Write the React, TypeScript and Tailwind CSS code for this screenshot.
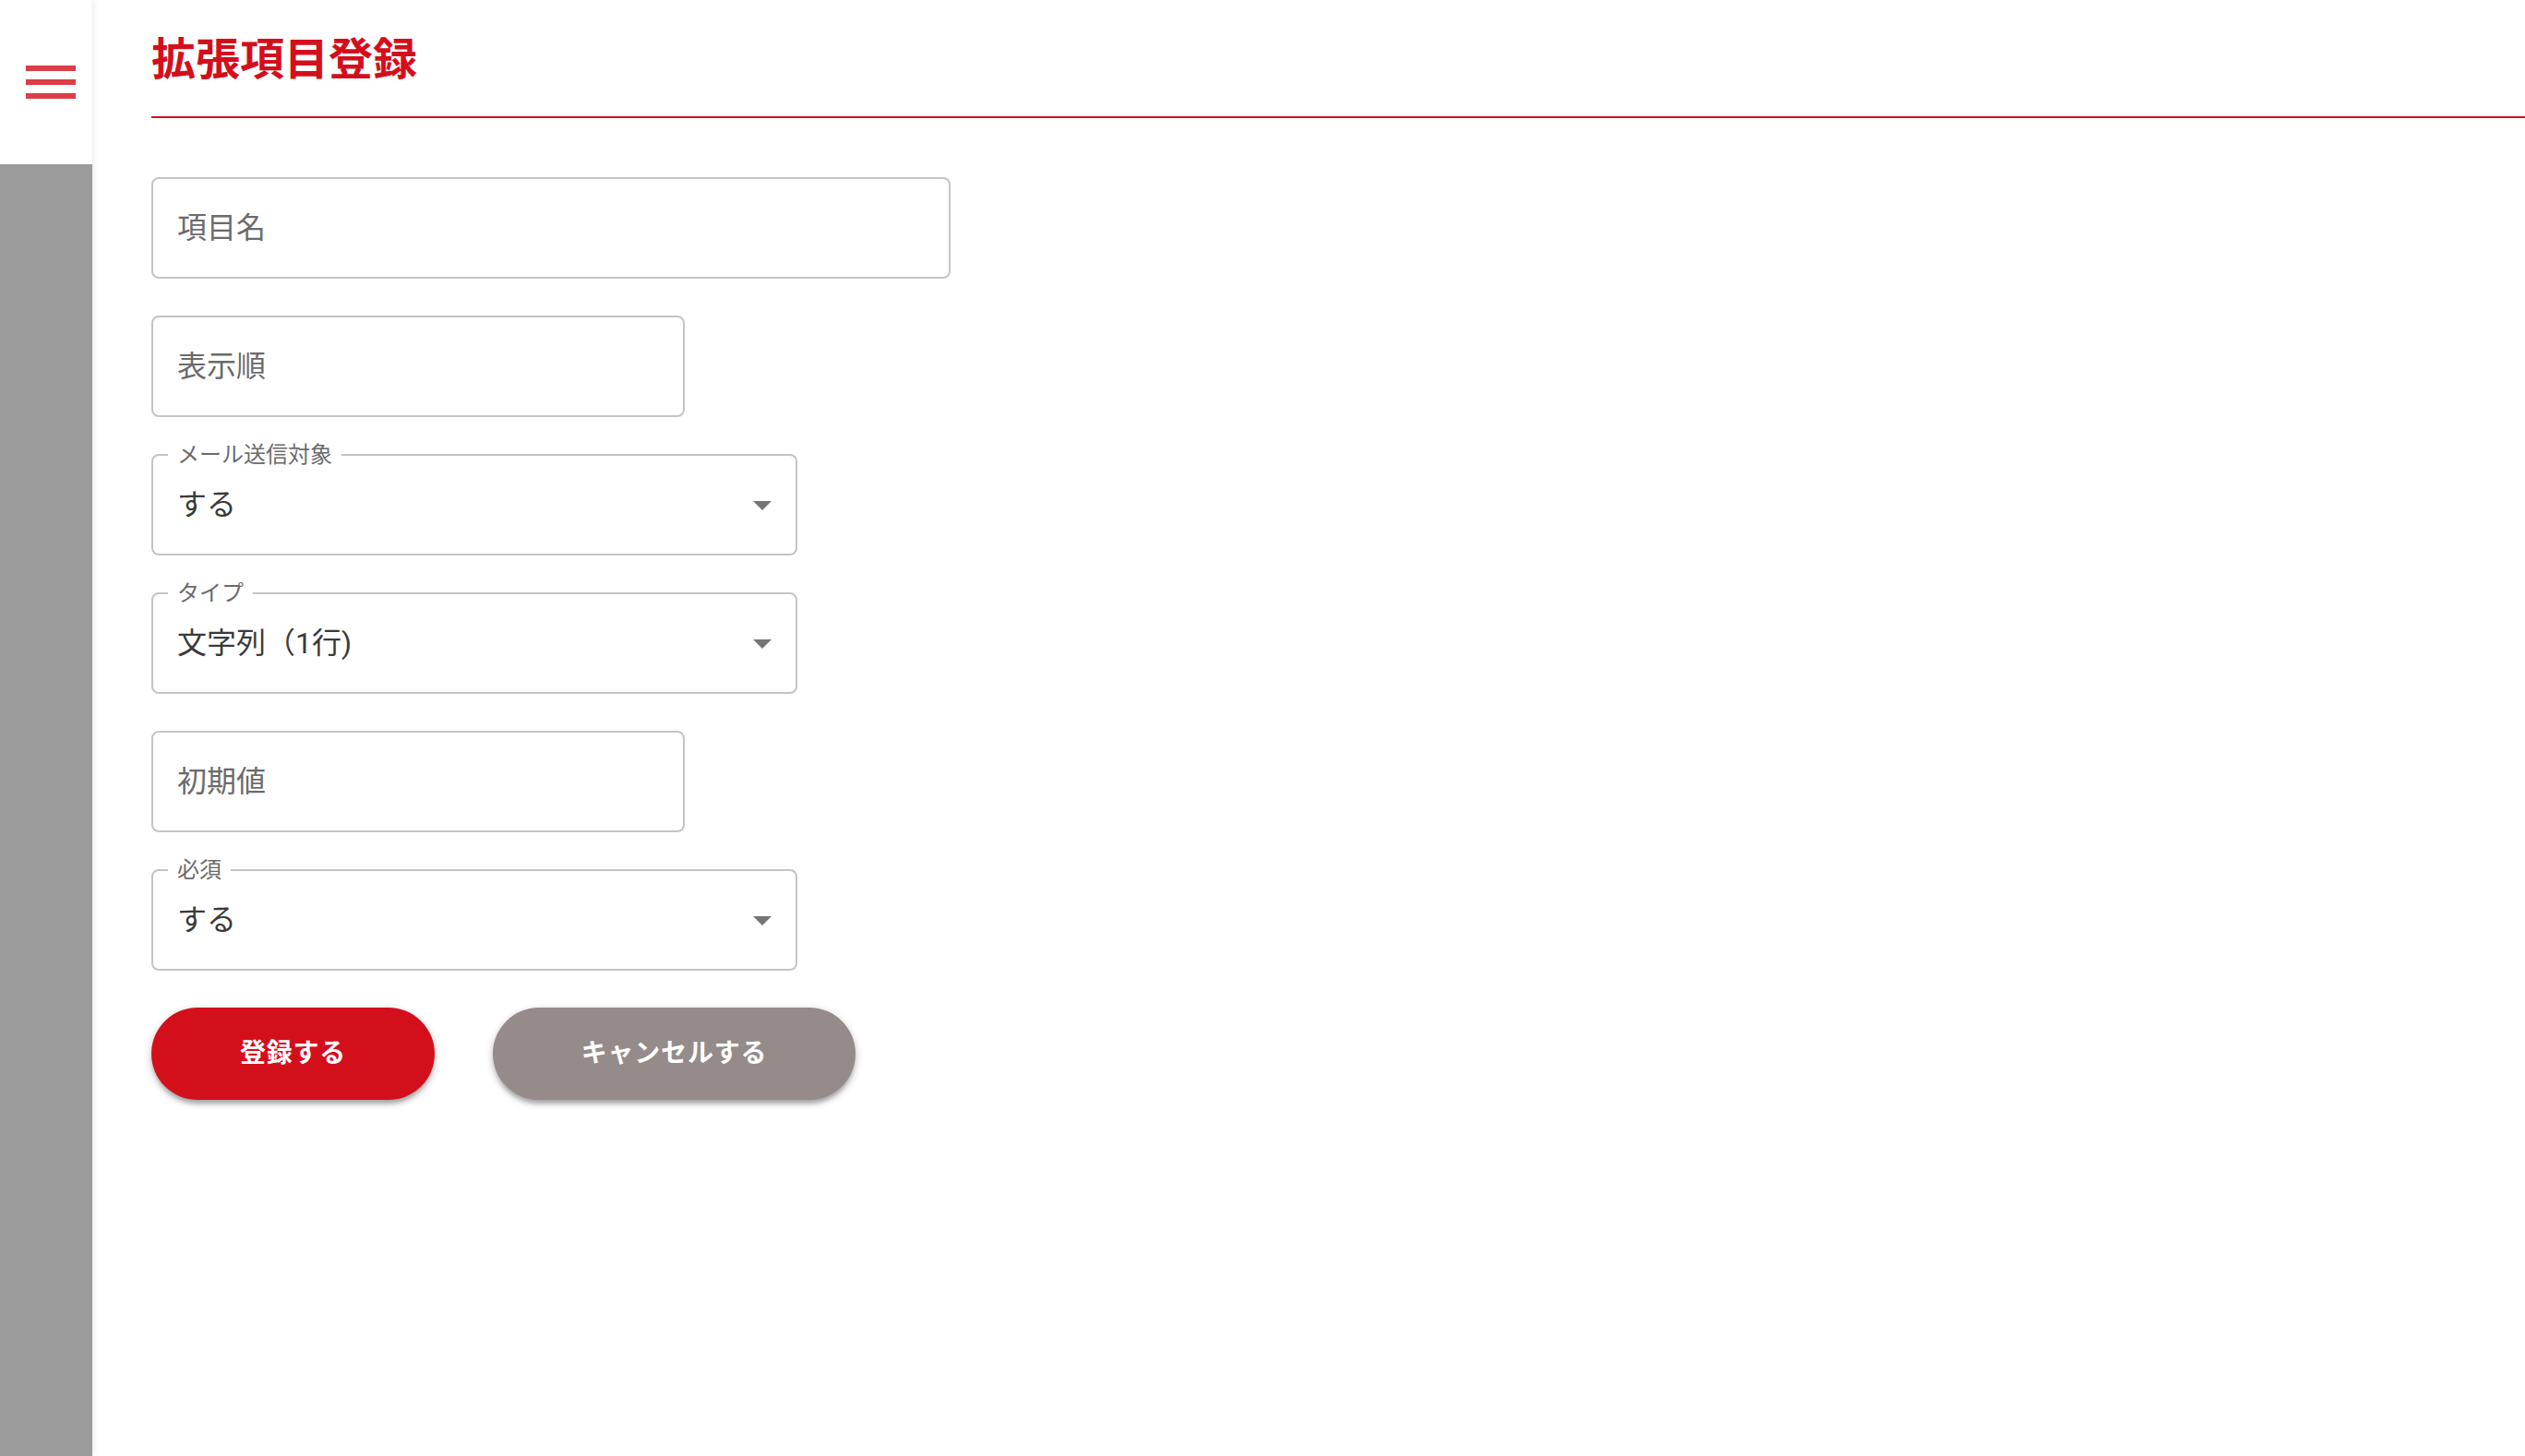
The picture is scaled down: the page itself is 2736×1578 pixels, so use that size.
import React from "react";

const font = "font-['Roboto','Noto_Sans_CJK_JP',sans-serif]";

function MenuIcon() {
  return (
    <svg width="72" height="72" viewBox="0 0 24 24" fill="#dc3d46" aria-hidden="true">
      <path d="M3 18h18v-2H3v2zm0-5h18v-2H3v2zm0-7v2h18V6H3z" />
    </svg>
  );
}

function ArrowDropDown() {
  return (
    <svg width="48" height="48" viewBox="0 0 24 24" fill="#757575" aria-hidden="true">
      <path d="M7 10l5 5 5-5z" />
    </svg>
  );
}

// outlined text field with the label shown as placeholder
function TextField({ label, width }: { label: string; width: string }) {
  return (
    <div
      className={`${width} h-[110px] flex items-center pl-[26px] border-2 border-[#c4c4c4] rounded-[8px] bg-white`}
    >
      <span className="text-[32px] leading-[40px] text-[#6b6b6b]">{label}</span>
    </div>
  );
}

// outlined select with the label floated onto the border
function SelectField({ label, value }: { label: string; value: string }) {
  return (
    <div className="relative w-[700px] h-[110px] flex items-center justify-between pl-[26px] pr-[12px] border-2 border-[#c4c4c4] rounded-[8px] bg-white">
      <span className="absolute left-[16px] -top-[13px] px-[10px] bg-white text-[24px] leading-[24px] text-[#6b6b6b]">
        {label}
      </span>
      <span className="text-[32px] leading-[40px] text-[#3a3a3a]">{value}</span>
      <ArrowDropDown />
    </div>
  );
}

export default function App() {
  return (
    <div className={`flex min-h-[1578px] bg-white ${font}`}>
      {/* Sidebar */}
      <aside className="w-[100px] shrink-0 flex flex-col z-10 shadow-[2px_0_5px_rgba(0,0,0,0.08)]">
        <div className="h-[178px] bg-white pl-[19px] pt-[53px]">
          <MenuIcon />
        </div>
        <div className="flex-1 bg-[#9b9b9b]" />
      </aside>

      {/* Main */}
      <main className="flex-1 pl-[64px]">
        <div className="h-[126px] pt-[37px]">
          <h1 className="text-[48px] leading-[56px] font-bold text-[#d40f1c]">拡張項目登録</h1>
        </div>
        <div className="h-[2px] bg-[#d40f1c]" />

        <form className="flex flex-col gap-[40px] mt-[64px]">
          <TextField label="項目名" width="w-[866px]" />
          <TextField label="表示順" width="w-[578px]" />
          <SelectField label="メール送信対象" value="する" />
          <SelectField label="タイプ" value="文字列（1行)" />
          <TextField label="初期値" width="w-[578px]" />
          <SelectField label="必須" value="する" />

          <div className="flex gap-[63px]">
            <button
              type="button"
              className="w-[307px] h-[100px] rounded-full bg-[#d40f1c] text-white text-[28px] font-bold tracking-[0.8px] shadow-[0_6px_4px_-2px_rgba(0,0,0,0.2),0_4px_8px_0_rgba(0,0,0,0.14),0_2px_10px_0_rgba(0,0,0,0.12)]"
            >
              登録する
            </button>
            <button
              type="button"
              className="w-[393px] h-[100px] rounded-full bg-[#958b8a] text-white text-[28px] font-bold tracking-[0.8px] shadow-[0_6px_4px_-2px_rgba(0,0,0,0.2),0_4px_8px_0_rgba(0,0,0,0.14),0_2px_10px_0_rgba(0,0,0,0.12)]"
            >
              キャンセルする
            </button>
          </div>
        </form>
      </main>
    </div>
  );
}
